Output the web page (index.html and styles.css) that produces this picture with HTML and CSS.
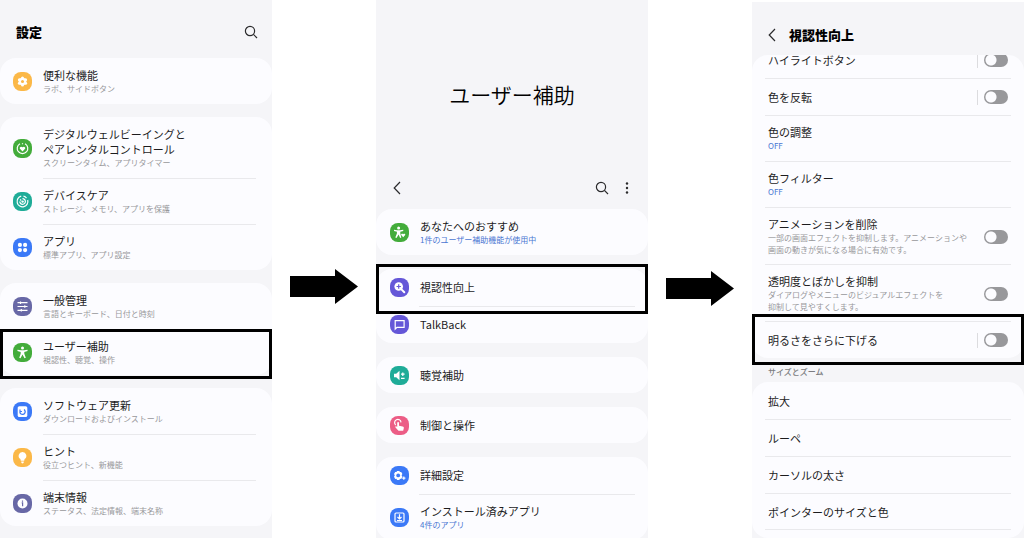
FILE: index.html
```
<!DOCTYPE html>
<html lang="ja">
<head>
<meta charset="utf-8">
<meta name="viewport" content="width=device-width, initial-scale=1">
<title>設定 - ユーザー補助</title>
<link rel="stylesheet" href="styles.css">
</head>
<body>
<main class="steps">
  <section class="phone">
    <header class="bar bar-settings">
      <h1 class="bar-title">設定</h1>
      <button class="icon-btn" aria-label="検索"><svg width="14" height="14" viewBox="0 0 14 14"><circle cx="6" cy="6" r="4.6"/><path d="M9.4 9.4L13 13"/></svg></button>
    </header>
    <div class="cards">
      <nav class="card">
        <a class="row" href="#"><svg class="badge orange" viewBox="0 0 19 19"><g class="fill"><circle cx="9.5" cy="9.5" r="3.8"/><circle cx="9.5" cy="5.900" r="1.500"/><circle cx="12.600" cy="7.700" r="1.500"/><circle cx="12.600" cy="11.300" r="1.500"/><circle cx="9.500" cy="13.100" r="1.500"/><circle cx="6.400" cy="11.300" r="1.500"/><circle cx="6.400" cy="7.700" r="1.500"/></g><circle class="hole" cx="9.500" cy="9.500" r="1.500"/></svg><span class="text"><span class="name">便利な機能</span><span class="sub">ラボ、サイドボタン</span></span></a>
      </nav>
      <nav class="card">
        <a class="row" href="#"><svg class="badge green" viewBox="0 0 19 19"><path class="line" d="M7 4.700A5.300 5.300 0 1 0 12 4.700M9.500 4.200v1"/><path class="fill" d="M9.500 12.400L6.900 9.700c-.9-1.500 1.300-2.900 2.600-1.400 1.300-1.500 3.500-.1 2.600 1.400z"/></svg><span class="text"><span class="name">デジタルウェルビーイングと<br>ペアレンタルコントロール</span><span class="sub">スクリーンタイム、アプリタイマー</span></span></a>
        <a class="row" href="#"><svg class="badge teal" viewBox="0 0 19 19"><path class="line" d="M8.200 4.200A5.400 5.400 0 1 0 14.700 8M10.500 4.200a5.400 5.400 0 0 1 3 1.900M6.800 9.500a2.800 2.800 0 1 0 2.700-2.800M7 7.500l1.300 1"/><circle class="fill" cx="9.600" cy="9.600" r="1.200"/></svg><span class="text"><span class="name">デバイスケア</span><span class="sub">ストレージ、メモリ、アプリを保護</span></span></a>
        <a class="row" href="#"><svg class="badge blue" viewBox="0 0 19 19"><g class="fill"><circle cx="6.900" cy="6.900" r="2.100"/><circle cx="12.100" cy="6.900" r="2.100"/><circle cx="6.900" cy="12.100" r="2.100"/><circle cx="12.100" cy="12.100" r="2.100"/></g></svg><span class="text"><span class="name">アプリ</span><span class="sub">標準アプリ、アプリ設定</span></span></a>
      </nav>
      <nav class="card">
        <a class="row" href="#"><svg class="badge violet" viewBox="0 0 19 19"><path class="line" d="M4.500 5.700h10M4.500 9.500h10M4.500 13.300h10M7.500 4.500v2.400M11.800 8.300v2.400M8.300 12.100v2.400"/></svg><span class="text"><span class="name">一般管理</span><span class="sub">言語とキーボード、日付と時刻</span></span></a>
        <a class="row marked marked-access" href="#"><svg class="badge green" viewBox="0 0 19 19"><circle class="fill" cx="9.500" cy="5.100" r="1.500"/><path class="fill" d="M4.500 6.800l3.500.5h3l3.500-.5.1 1.300-3.300.8v1.900l1.500 4-1.300.5-2-3.900-2 3.900-1.300-.5 1.500-4V8.900l-3.300-.8z"/></svg><span class="text"><span class="name">ユーザー補助</span><span class="sub">視認性、聴覚、操作</span></span></a>
      </nav>
      <nav class="card">
        <a class="row" href="#"><svg class="badge blue" viewBox="0 0 19 19"><rect class="fill" x="4.700" y="4.200" width="9.600" height="10.800" rx="1.600"/><path class="hole-line" d="M7 9.300a2.600 2.600 0 1 0 4.200-1.500M7 7.500v2h2M11.500 7.200v1"/></svg><span class="text"><span class="name">ソフトウェア更新</span><span class="sub">ダウンロードおよびインストール</span></span></a>
        <a class="row" href="#"><svg class="badge orange" viewBox="0 0 19 19"><path class="fill" d="M9.500 4a3.800 3.800 0 0 1 2.100 7l-.4 1.700H7.800L7.400 11a3.800 3.800 0 0 1 2.100-7zM8.200 13.500h2.600v.6a1.300 1.300 0 0 1-2.600 0z"/></svg><span class="text"><span class="name">ヒント</span><span class="sub">役立つヒント、新機能</span></span></a>
        <a class="row" href="#"><svg class="badge violet" viewBox="0 0 19 19"><circle class="fill" cx="9.500" cy="9.500" r="5"/><path class="hole-line" d="M8.700 8.900h.9v3.400M9.500 6.500v1.200"/></svg><span class="text"><span class="name">端末情報</span><span class="sub">ステータス、法定情報、端末名称</span></span></a>
      </nav>
    </div>
  </section>

  <div class="gap"><svg class="arrow" viewBox="0 0 68 35" aria-hidden="true"><path d="M0 7h45V0l23 17.500L45 35v-7H0z"/></svg></div>

  <section class="phone phone-access">
    <h1 class="hero">ユーザー補助</h1>
    <header class="bar bar-tools">
      <button class="icon-btn" aria-label="戻る"><svg width="8" height="14" viewBox="0 0 8 14"><path d="M7 1L1.200 7 7 13"/></svg></button>
      <button class="icon-btn push" aria-label="検索"><svg width="14" height="14" viewBox="0 0 14 14"><circle cx="6" cy="6" r="4.600"/><path d="M9.400 9.400L13 13"/></svg></button>
      <button class="icon-btn" aria-label="その他"><svg width="4" height="14" viewBox="0 0 4 14"><g class="dots"><circle cx="2" cy="2.500" r="1.200"/><circle cx="2" cy="7" r="1.200"/><circle cx="2" cy="11.500" r="1.200"/></g></svg></button>
    </header>
    <div class="cards cards-access">
      <nav class="card">
        <a class="row" href="#"><svg class="badge green" viewBox="0 0 19 19"><circle class="fill" cx="8.600" cy="5" r="1.500"/><path class="fill" d="M4 6.800l3.200.4h2.800l3.200-.4.1 1.200-3 .8v1.700l1 4-1.200.4-1.500-3.500-2.100 3.600-1.200-.6 1.600-3.900V8.800L4 8zM13.200 14.200l-2-2.100c-.6-1.200 1.100-2 2-.9.900-1.100 2.600-.3 2 .9z"/></svg><span class="text"><span class="name">あなたへのおすすめ</span><span class="sub link">1件のユーザー補助機能が使用中</span></span></a>
      </nav>
      <nav class="card">
        <a class="row single marked marked-vision" href="#"><svg class="badge indigo" viewBox="0 0 19 19"><circle class="fill" cx="8.700" cy="8.500" r="4.300"/><path class="thick" d="M11.700 11.600l2.600 2.700"/><path class="hole-line" d="M8.700 6.300v4.400M6.500 8.500h4.400"/></svg><span class="text"><span class="name">視認性向上</span></span></a>
        <a class="row single" href="#"><svg class="badge indigo" viewBox="0 0 19 19"><path class="line" d="M5.200 14V5.700h8.900v6.600H7z"/></svg><span class="text"><span class="name">TalkBack</span></span></a>
      </nav>
      <nav class="card">
        <a class="row single alone" href="#"><svg class="badge teal" viewBox="0 0 19 19"><path class="fill" d="M4 7.700h2.200l3.300-2.900v9.400l-3.300-2.900H4z"/><path class="line" d="M11 8.200h3.600M12.800 6.400V10M11 12.300h3.600"/></svg><span class="text"><span class="name">聴覚補助</span></span></a>
      </nav>
      <nav class="card">
        <a class="row single alone" href="#"><svg class="badge pink" viewBox="0 0 19 19"><path class="line" d="M5.700 9a3.200 3.200 0 1 1 5.300-2.600"/><path class="fill" d="M7.200 6.800c0-1.200 1.800-1.200 1.800 0v3l3.600.7c1 .2 1.400.8 1.200 1.800l-.6 2.400H8.500l-3-3.200c-.5-.8.4-1.400 1-1l.7.400z"/></svg><span class="text"><span class="name">制御と操作</span></span></a>
      </nav>
      <nav class="card">
        <a class="row single" href="#"><svg class="badge blue" viewBox="0 0 19 19"><path class="fill" d="M7 4.900h2.400l.5 1.200 1.300-.1 1.200 2.100-.8 1.100.8 1.600-1.200 2.100-1.300-.1-.5 1.200H7l-.5-1.200-1.300.1L4 10.800l.8-1.600L4 8.100 5.200 6l1.300.1z"/><circle class="hole" cx="8.200" cy="9.400" r="1.900"/><path class="line" d="M13.800 10.600v3.200M12.200 12.200h3.200"/></svg><span class="text"><span class="name">詳細設定</span></span></a>
        <a class="row" href="#"><svg class="badge blue" viewBox="0 0 19 19"><rect class="line" x="5" y="5" width="9" height="9" rx="1"/><path class="line" d="M9.500 6.200v4.600M7.500 9l2 2 2-2M7 12.500h5"/></svg><span class="text"><span class="name">インストール済みアプリ</span><span class="sub link">4件のアプリ</span></span></a>
      </nav>
    </div>
  </section>

  <div class="gap gap-low"><svg class="arrow" viewBox="0 0 68 35" aria-hidden="true"><path d="M0 7h45V0l23 17.500L45 35v-7H0z"/></svg></div>

  <section class="phone phone-vision">
    <header class="bar bar-vision">
      <button class="icon-btn" aria-label="戻る"><svg width="8" height="14" viewBox="0 0 8 14"><path d="M7 1L1.200 7 7 13"/></svg></button>
      <h1 class="bar-title">視認性向上</h1>
    </header>
    <div class="scroll">
      <div class="card plain">
        <div class="row scrolled"><label class="text" for="t1"><span class="name">ハイライトボタン</span></label><span class="split"></span><input class="toggle" type="checkbox" id="t1"></div>
        <div class="row"><label class="text" for="t2"><span class="name">色を反転</span></label><span class="split"></span><input class="toggle" type="checkbox" id="t2"></div>
        <a class="row" href="#"><span class="text"><span class="name">色の調整</span><span class="sub link">OFF</span></span></a>
        <a class="row" href="#"><span class="text"><span class="name">色フィルター</span><span class="sub link">OFF</span></span></a>
        <div class="row long"><label class="text" for="t3"><span class="name">アニメーションを削除</span><span class="sub">一部の画面エフェクトを抑制します。アニメーションや<br>画面の動きが気になる場合に有効です。</span></label><input class="toggle" type="checkbox" id="t3"></div>
        <div class="row long"><label class="text" for="t4"><span class="name">透明度とぼかしを抑制</span><span class="sub">ダイアログやメニューのビジュアルエフェクトを<br>抑制して見やすくします。</span></label><input class="toggle" type="checkbox" id="t4"></div>
        <div class="row marked marked-dim"><label class="text" for="t5"><span class="name">明るさをさらに下げる</span></label><span class="split"></span><input class="toggle" type="checkbox" id="t5"></div>
      </div>
      <h2 class="group">サイズとズーム</h2>
      <nav class="card plain more">
        <a class="row" href="#"><span class="text"><span class="name">拡大</span></span></a>
        <a class="row" href="#"><span class="text"><span class="name">ルーペ</span></span></a>
        <a class="row" href="#"><span class="text"><span class="name">カーソルの太さ</span></span></a>
        <a class="row" href="#"><span class="text"><span class="name">ポインターのサイズと色</span></span></a>
      </nav>
    </div>
  </section>
</main>
</body>
</html>
```

FILE: styles.css
```
* {
  box-sizing: border-box;
}

body {
  margin: 0;
  background: #fff;
  color: #1c1c1e;
  font-family: "Noto Sans CJK JP", "Noto Sans", sans-serif;
  font-size: 11px;
  line-height: 15px;
}

.steps {
  display: grid;
  grid-template-columns: 272fr 104fr 272fr 104fr 272fr;
  height: 100vh;
  overflow: hidden;
}

.phone {
  min-width: 0;
  overflow: hidden;
  background: #f5f5f8;
}

.phone-vision {
  margin-top: 2px;
}

/* Arrows between the steps */
.gap {
  display: flex;
  justify-content: center;
  align-items: flex-start;
  padding-top: 269px;
}

.gap-low {
  padding-top: 271px;
}

.arrow {
  width: 68px;
  height: 35px;
}

/* Headers */
.bar {
  display: flex;
  align-items: center;
}

.bar-settings {
  justify-content: space-between;
  height: 58px;
  padding: 6px 14px 0 16px;
}

.bar-tools {
  gap: 16px;
  height: 42px;
  padding: 0 19px 0 17px;
}

.bar-vision {
  gap: 13px;
  height: 53px;
  padding: 12px 16px 0;
}

.bar-title {
  margin: 0;
  font-size: 13px;
  font-weight: 900;
  line-height: 20px;
  color: #000;
}

.hero {
  display: flex;
  align-items: center;
  justify-content: center;
  height: 167px;
  margin: 0;
  padding-top: 20px;
  font-size: 21px;
  font-weight: 350;
  line-height: 30px;
  color: #000;
}

.icon-btn {
  display: flex;
  padding: 0;
  border: 0;
  background: none;
}

.icon-btn svg {
  fill: none;
  stroke: #2a2a2c;
  stroke-width: 1.2;
}

.icon-btn .dots {
  fill: #2a2a2c;
  stroke: none;
}

.push {
  margin-left: auto;
}

/* Cards and rows */
.cards {
  display: flex;
  flex-direction: column;
  gap: 13px;
}

.cards-access {
  gap: 14px;
}

.card {
  display: flex;
  flex-direction: column;
  border-radius: 16px;
  background: #fcfcff;
}

.row {
  position: relative;
  display: flex;
  align-items: center;
  gap: 11px;
  min-height: 37px;
  padding: 10px 16px 9px 13px;
  color: inherit;
  text-decoration: none;
}

.cards-access .row {
  padding-left: 14px;
}

.cards-access .single {
  padding-top: 8px;
  padding-bottom: 8px;
}

.cards-access .alone {
  min-height: 36px;
}

.row + .row::before {
  content: "";
  position: absolute;
  top: 0;
  left: 43px;
  right: 16px;
  height: 1px;
  background: #e9e9ec;
}

.cards-access .row + .row::before {
  right: 13px;
}

.text {
  display: flex;
  flex-direction: column;
  min-width: 0;
  white-space: nowrap;
}

.name {
  font-weight: 400;
}

.sub {
  font-size: 8px;
  line-height: 12px;
  color: #98989b;
}

.link {
  color: #4a76d2;
}

.plain .row {
  gap: 6px;
  padding-left: 16px;
}

.plain .row + .row::before {
  left: 13px;
  right: 13px;
}

.plain .long {
  padding-bottom: 8px;
}

.plain .text {
  margin-right: auto;
}

/* The list is scrolled under the header */
.scroll {
  overflow: hidden;
}

.scrolled {
  margin-top: -14px;
}

.group {
  margin: 0;
  padding: 8px 16px 4px;
  font-size: 8px;
  font-weight: 500;
  line-height: 12px;
  color: #7c7c80;
}

.more {
  padding-bottom: 8px;
}

.more .row:last-child::after {
  content: "";
  position: absolute;
  bottom: 0;
  left: 13px;
  right: 13px;
  height: 1px;
  background: #e9e9ec;
}

/* Emphasis frame over a row */
.marked::after {
  content: "";
  position: absolute;
  z-index: 1;
  left: 0;
  right: 0;
  border: 3px solid #000;
  pointer-events: none;
}

.marked-access::after {
  top: 0;
  bottom: -4px;
}

.marked-vision::after {
  top: -5px;
  bottom: -8px;
}

.marked-dim::after {
  top: -7px;
  bottom: -7px;
}

/* Toggles */
.split {
  width: 1px;
  height: 15px;
  background: #dcdcdf;
}

.toggle {
  flex: none;
  width: 24px;
  height: 14px;
  margin: 0;
  border-radius: 7px;
  appearance: none;
  background: radial-gradient(circle at 7px 7px, #fcfcff 5px, transparent 6px) #98989b;
}

/* Badges */
.badge {
  flex: none;
  width: 19px;
  height: 19px;
  border-radius: 8px;
  background: var(--tone);
}

.orange { --tone: #fbb848; }
.green { --tone: #43ac3b; }
.teal { --tone: #1fac98; }
.blue { --tone: #3b79f7; }
.violet { --tone: #6868a6; }
.indigo { --tone: #6557d8; }
.pink { --tone: #ec5d86; }

.fill {
  fill: #fff;
}

.hole {
  fill: var(--tone);
}

.line,
.thick,
.hole-line {
  fill: none;
  stroke: #fff;
  stroke-width: 1.2;
}

.thick {
  stroke-width: 2;
  stroke-linecap: round;
}

.hole-line {
  stroke: var(--tone);
}
```
